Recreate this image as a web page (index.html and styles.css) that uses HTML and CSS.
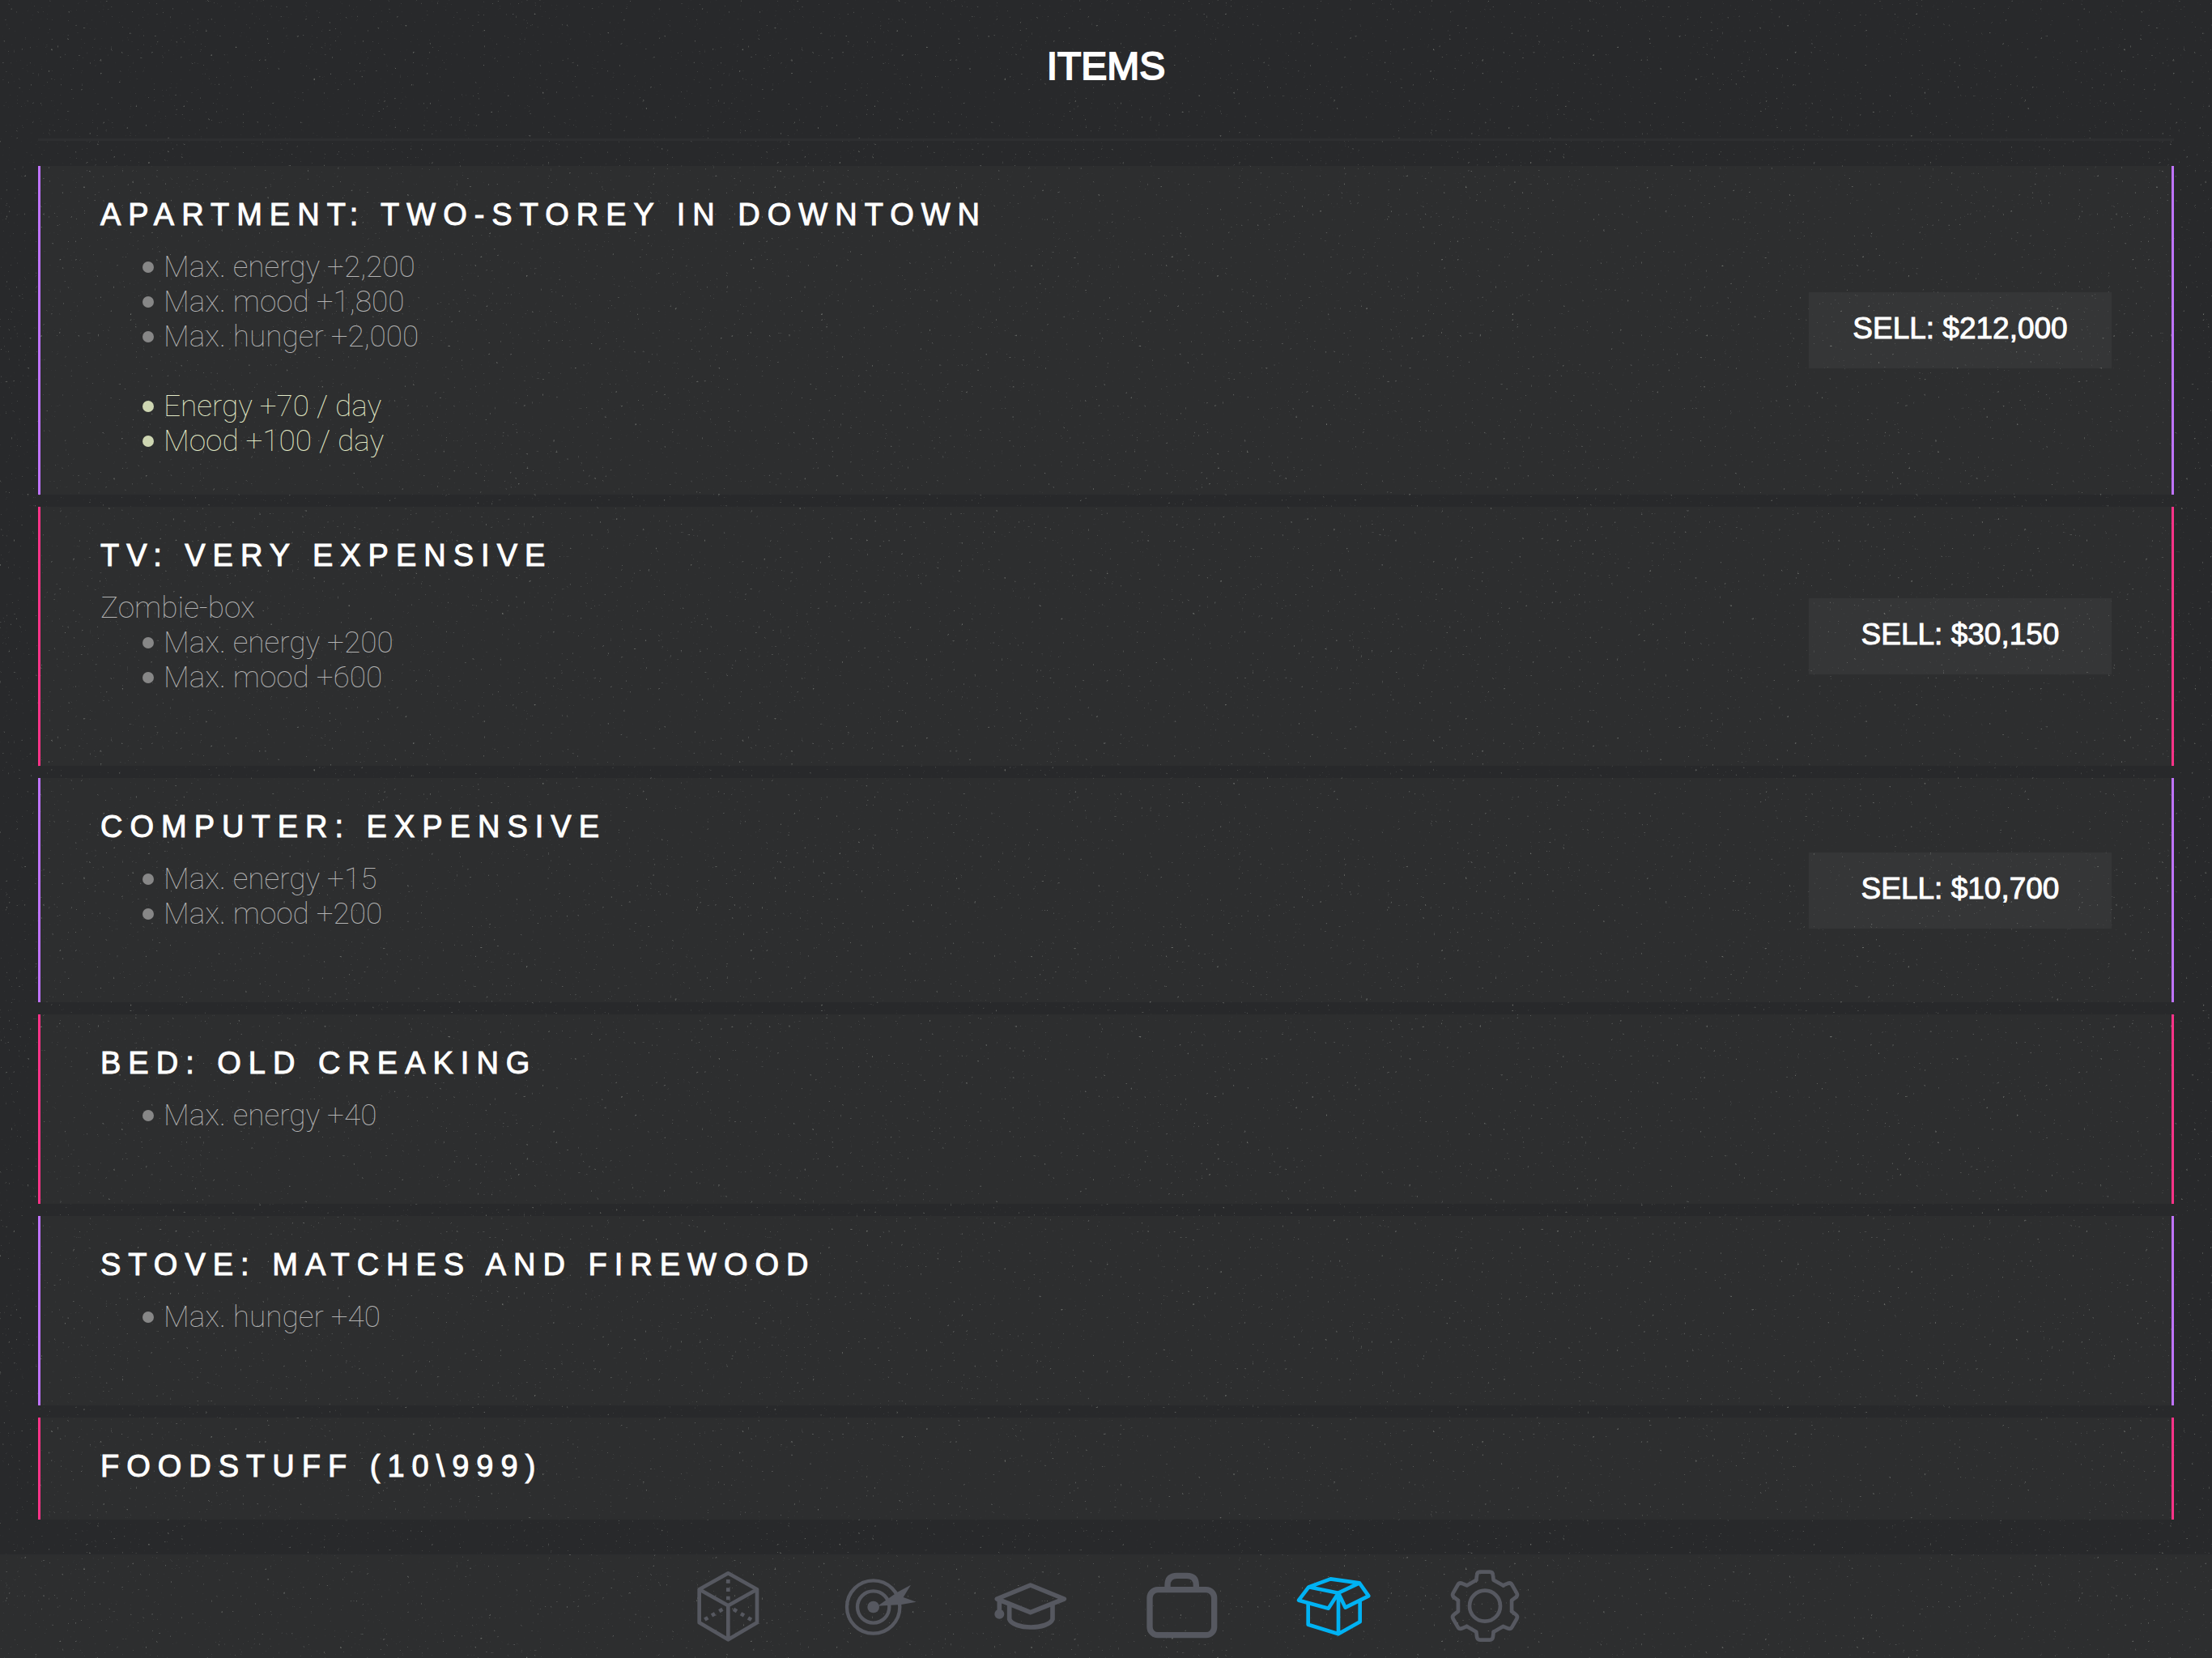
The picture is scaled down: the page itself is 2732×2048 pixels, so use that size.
FILE: index.html
```html
<!DOCTYPE html>
<html lang="en">
<head>
<meta charset="utf-8">
<meta name="viewport" content="width=device-width, initial-scale=1">
<title>Items</title>
<link rel="stylesheet" href="styles.css">
</head>
<body>
<div class="screen">
  <header class="header">
    <h1 class="title">ITEMS</h1>
  </header>

  <main class="items">
    <section class="card">
      <div class="info">
        <h2 class="name">APARTMENT: TWO-STOREY IN DOWNTOWN</h2>
        <div class="details">
          <ul class="effects">
            <li>Max. energy +2,200</li>
            <li>Max. mood +1,800</li>
            <li>Max. hunger +2,000</li>
          </ul>
          <ul class="effects daily">
            <li>Energy +70 / day</li>
            <li>Mood +100 / day</li>
          </ul>
        </div>
      </div>
      <button class="sell" type="button">SELL: $212,000</button>
    </section>

    <section class="card">
      <div class="info">
        <h2 class="name">TV: VERY EXPENSIVE</h2>
        <div class="details">
          <p class="note">Zombie-box</p>
          <ul class="effects">
            <li>Max. energy +200</li>
            <li>Max. mood +600</li>
          </ul>
        </div>
      </div>
      <button class="sell" type="button">SELL: $30,150</button>
    </section>

    <section class="card">
      <div class="info">
        <h2 class="name">COMPUTER: EXPENSIVE</h2>
        <div class="details">
          <ul class="effects">
            <li>Max. energy +15</li>
            <li>Max. mood +200</li>
          </ul>
        </div>
      </div>
      <button class="sell" type="button">SELL: $10,700</button>
    </section>

    <section class="card">
      <div class="info">
        <h2 class="name">BED: OLD CREAKING</h2>
        <div class="details">
          <ul class="effects">
            <li>Max. energy +40</li>
          </ul>
        </div>
      </div>
    </section>

    <section class="card">
      <div class="info">
        <h2 class="name">STOVE: MATCHES AND FIREWOOD</h2>
        <div class="details">
          <ul class="effects">
            <li>Max. hunger +40</li>
          </ul>
        </div>
      </div>
    </section>

    <section class="card">
      <div class="info">
        <h2 class="name">FOODSTUFF (10\999)</h2>
      </div>
    </section>
  </main>

  <nav class="tabs" aria-label="Sections">
    <a class="tab" href="#dice" aria-label="Dice">
      <svg class="icon" viewBox="0 0 288 288" stroke-width="14" stroke-linejoin="round">
        <path d="M145 22 252 82V205L145 268 38 205V82ZM38 82 145 142 252 82M145 142V268"/>
        <g class="solid">
          <path d="M138 45h14v14h-14zM138 76h14v14h-14zM138 107h14v14h-14z"/>
          <rect x="111" y="152" width="14" height="14" transform="rotate(-30 118 159)"/>
          <rect x="83" y="168" width="14" height="14" transform="rotate(-30 90 175)"/>
          <rect x="57" y="183" width="14" height="14" transform="rotate(-30 64 190)"/>
          <rect x="164" y="152" width="14" height="14" transform="rotate(30 171 159)"/>
          <rect x="191" y="168" width="14" height="14" transform="rotate(30 198 175)"/>
          <rect x="218" y="184" width="14" height="14" transform="rotate(30 225 191)"/>
        </g>
      </svg>
    </a>
    <a class="tab" href="#goals" aria-label="Goals">
      <svg class="icon" viewBox="0 0 288 288" stroke-width="13">
        <circle cx="122" cy="147" r="98"/>
        <circle cx="122" cy="147" r="59"/>
        <circle class="solid" cx="122" cy="147" r="22"/>
        <path class="solid" d="M138 143 211 92 261 65 233 111 281 128 226 138Z"/>
      </svg>
    </a>
    <a class="tab" href="#education" aria-label="Education">
      <svg class="icon" viewBox="0 0 288 288" stroke-width="17" stroke-linejoin="round">
        <path d="M143 66 268 117 143 167 19 117ZM65 138V192C80 232 210 232 225 192V138M28 120V173"/>
        <circle class="solid" cx="28" cy="173" r="18"/>
      </svg>
    </a>
    <a class="tab" href="#work" aria-label="Work">
      <svg class="icon" viewBox="0 0 288 288" stroke-width="22">
        <rect x="24" y="83" width="239" height="168" rx="30"/>
        <path d="M90 83V66Q90 31 125 31H161Q196 31 196 66V83"/>
      </svg>
    </a>
    <a class="tab active" href="#items" aria-label="Items" aria-current="page">
      <svg class="icon" viewBox="0 0 288 288" stroke-width="14" stroke-linejoin="round">
        <path d="M133 43 240 58 162 95 52 73ZM52 73 15 122 125 152 162 95M240 58 274 106 188 149 162 95V247M50 132V212L162 247 242 202V124"/>
      </svg>
    </a>
    <a class="tab" href="#settings" aria-label="Settings">
      <svg class="icon" viewBox="0 0 288 288" stroke-width="14" stroke-linejoin="round" stroke-linecap="round">
        <defs>
          <path id="tooth" d="M-32-96-30-113Q-29-126-18-126H18Q29-126 30-113L32-96 67-76"/>
        </defs>
        <g transform="translate(144 143)">
          <circle r="57"/>
          <use href="#tooth"/>
          <use href="#tooth" transform="rotate(60)"/>
          <use href="#tooth" transform="rotate(120)"/>
          <use href="#tooth" transform="rotate(180)"/>
          <use href="#tooth" transform="rotate(240)"/>
          <use href="#tooth" transform="rotate(300)"/>
        </g>
      </svg>
    </a>
  </nav>

  <svg class="speckle" aria-hidden="true">
    <filter id="specks" x="0" y="0" width="100%" height="100%" color-interpolation-filters="sRGB">
      <feTurbulence type="fractalNoise" baseFrequency="0.3" numOctaves="2" seed="4"/>
      <feColorMatrix values="0 0 0 0 0.45  0 0 0 0 0.46  0 0 0 0 0.44  5 0 0 0 -3.7"/>
    </filter>
    <rect width="100%" height="100%" filter="url(#specks)"/>
  </svg>
</div>
</body>
</html>
```
FILE: styles.css
```css
* {
  box-sizing: border-box;
}

body {
  margin: 0;
  background: #28292b;
  color: #fff;
  font-family: "Liberation Sans", Arial, sans-serif;
}

h1, h2, p, ul {
  margin: 0;
  padding: 0;
}

.screen {
  position: relative;
  z-index: 0;
  display: flex;
  flex-direction: column;
  min-height: 100vh;
}

/* Header */
.header {
  margin: 0 47px;
  padding: 54px 0 61px;
  border-bottom: 3px solid #2e2f31;
  text-align: center;
}

.title {
  font-size: 48px;
  line-height: 56px;
  font-weight: 400;
  -webkit-text-stroke: 2px #fff;
}

/* Item list */
.items {
  flex: 1;
  display: flex;
  flex-direction: column;
  gap: 15px;
  padding: 31px 47px 43px;
}

.card {
  display: flex;
  align-items: center;
  justify-content: space-between;
  padding: 38px 74px 44px;
  background: rgba(255, 255, 255, 0.024);
  background-clip: padding-box;
  border: solid #bf73ff;
  border-width: 0 3px;
}

.card:nth-child(even) {
  border-color: #ff3388;
}

.name {
  font-size: 38px;
  line-height: 44px;
  font-weight: 400;
  letter-spacing: 9px;
  -webkit-text-stroke: 1px #fff;
}

.details {
  padding-top: 21px;
  padding-bottom: 1px;
  font-family: Roboto, "Liberation Sans", sans-serif;
  font-size: 37px;
  line-height: 43px;
  font-weight: 100;
  color: #b4b4b4;
}

.effects {
  list-style: none;
  padding-left: 52px;
  margin-bottom: 43px;
}

.effects li {
  display: flex;
  align-items: center;
  gap: 12px;
}

.effects li::before {
  content: "";
  width: 14px;
  height: 14px;
  border-radius: 50%;
  background: #878787;
}

.daily {
  color: #e4ecc8;
  margin-bottom: 0;
}

.effects.daily li::before {
  background: #ced6b2;
}

.sell {
  align-self: center;
  width: 374px;
  height: 94px;
  margin-top: 6px;
  padding: 0 0 4px;
  border: 0;
  background: rgba(255, 255, 255, 0.04);
  color: #fff;
  font-family: inherit;
  font-size: 37px;
  -webkit-text-stroke: 1px #fff;
}

/* Bottom tabs */
.tabs {
  display: flex;
  justify-content: center;
  background: rgba(255, 255, 255, 0.024);
}

.tab {
  display: flex;
  justify-content: center;
  width: 187px;
  padding: 16px 0;
  color: #565860;
}

.tab.active {
  color: #00b2f3;
}

.icon {
  width: 96px;
  height: 96px;
  fill: none;
  stroke: currentColor;
}

.icon .solid {
  fill: currentColor;
  stroke: none;
}

/* Dust texture behind the whole screen */
.speckle {
  position: absolute;
  inset: 0;
  z-index: -1;
  width: 100%;
  height: 100%;
  pointer-events: none;
}
```
